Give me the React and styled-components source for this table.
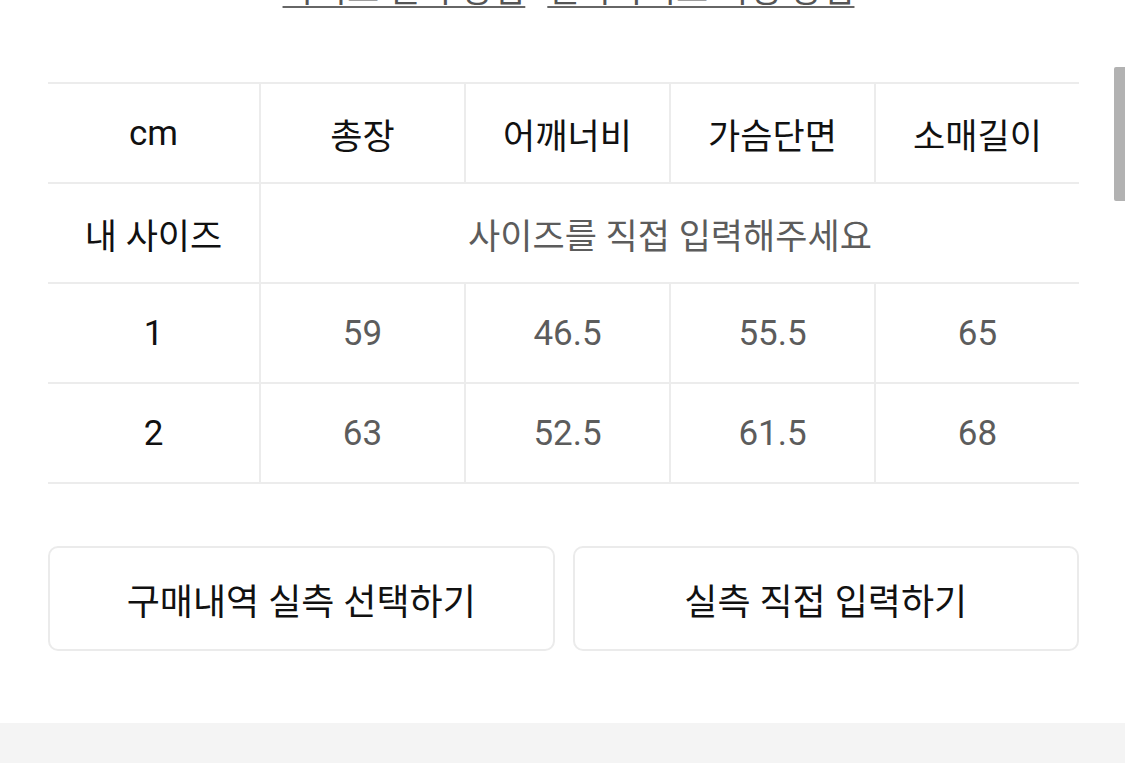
import React from "react";
import styled, { createGlobalStyle } from "styled-components";

const Global = createGlobalStyle`
  html, body { margin: 0; padding: 0; background: #fff; overflow: hidden; }
  body { font-family: Roboto, "Noto Sans CJK KR", sans-serif; color: #111; }
`;

const Page = styled.div`
  width: 1125px;
  height: 763px;
  display: flex;
  flex-direction: column;
  overflow: hidden;
  position: relative;
`;

const Content = styled.div`
  padding: 0 46px 0 48px;
  display: flex;
  flex-direction: column;
`;

const LinkRow = styled.div`
  display: flex;
  justify-content: center;
  gap: 22px;
  margin-top: -29px;
  height: 44px;
  padding-left: 10px;
`;

const Link = styled.a`
  font-size: 35px;
  line-height: 40px;
  color: #555;
  text-decoration: underline;
  text-decoration-thickness: 2px;
  text-underline-offset: 4px;
  text-decoration-color: #666;
  white-space: nowrap;
`;

const Table = styled.table`
  margin-top: 67px;
  width: 1031px;
  border-collapse: collapse;
  table-layout: fixed;
  border-top: 2px solid #ececec;
`;

const Cell = styled.td`
  height: 98px;
  padding: 0;
  text-align: center;
  vertical-align: middle;
  font-size: 35px;
  color: ${(p) => (p.$muted ? "#5c5c5c" : "#111")};
  border-bottom: 2px solid #ececec;
  border-left: ${(p) => (p.$first ? "none" : "2px solid #ececec")};
  white-space: nowrap;
`;

const Col = styled.col`
  width: ${(p) => p.$w};
`;

const Buttons = styled.div`
  margin-top: 62px;
  display: grid;
  grid-template-columns: 1fr 1fr;
  gap: 18px;
  width: 1031px;
`;

const Button = styled.button`
  height: 105px;
  background: #fff;
  border: 2px solid #ebebeb;
  border-radius: 10px;
  font-family: inherit;
  font-size: 36px;
  color: #111;
  padding: 0;
`;

const Footer = styled.div`
  margin-top: 72px;
  flex: 1;
  background: #f4f4f4;
`;

const Scrollbar = styled.div`
  position: absolute;
  right: 0;
  top: 67px;
  width: 11px;
  height: 134px;
  background: #b2b2b2;
  border-radius: 2px 0 0 2px;
`;

const header = ["총장", "어깨너비", "가슴단면", "소매길이"];
const rows = [
  ["1", "59", "46.5", "55.5", "65"],
  ["2", "63", "52.5", "61.5", "68"],
];

export default function App() {
  return (
    <Page>
      <Global />
      <Content>
        <LinkRow>
          <Link>사이즈 실측 방법</Link>
          <Link>실측사이즈 측정 방법</Link>
        </LinkRow>
        <Table>
          <colgroup>
            <Col $w="212px" />
            <Col $w="205px" />
            <Col $w="205px" />
            <Col $w="205px" />
            <Col $w="204px" />
          </colgroup>
          <tbody>
            <tr>
              <Cell $first>cm</Cell>
              {header.map((h) => (
                <Cell key={h}>{h}</Cell>
              ))}
            </tr>
            <tr>
              <Cell $first>내 사이즈</Cell>
              <Cell colSpan={4} $muted>
                사이즈를 직접 입력해주세요
              </Cell>
            </tr>
            {rows.map((r) => (
              <tr key={r[0]}>
                <Cell $first>{r[0]}</Cell>
                {r.slice(1).map((v, i) => (
                  <Cell key={i} $muted>
                    {v}
                  </Cell>
                ))}
              </tr>
            ))}
          </tbody>
        </Table>
        <Buttons>
          <Button>구매내역 실측 선택하기</Button>
          <Button>실측 직접 입력하기</Button>
        </Buttons>
      </Content>
      <Footer />
      <Scrollbar />
    </Page>
  );
}
